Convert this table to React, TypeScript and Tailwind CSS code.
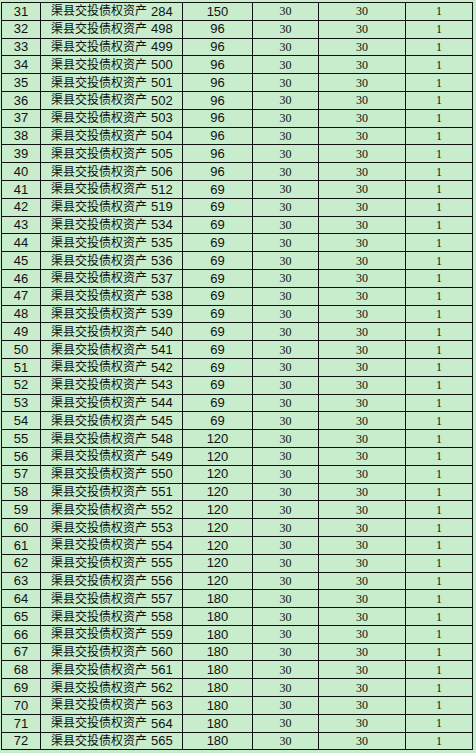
import React from 'react'

const rows: [number, number, number][] = [
  [31, 284, 150], [32, 498, 96], [33, 499, 96], [34, 500, 96], [35, 501, 96],
  [36, 502, 96], [37, 503, 96], [38, 504, 96], [39, 505, 96], [40, 506, 96],
  [41, 512, 69], [42, 519, 69], [43, 534, 69], [44, 535, 69], [45, 536, 69],
  [46, 537, 69], [47, 538, 69], [48, 539, 69], [49, 540, 69], [50, 541, 69],
  [51, 542, 69], [52, 543, 69], [53, 544, 69], [54, 545, 69], [55, 548, 120],
  [56, 549, 120], [57, 550, 120], [58, 551, 120], [59, 552, 120], [60, 553, 120],
  [61, 554, 120], [62, 555, 120], [63, 556, 120], [64, 557, 180], [65, 558, 180],
  [66, 559, 180], [67, 560, 180], [68, 561, 180], [69, 562, 180], [70, 563, 180],
  [71, 564, 180], [72, 565, 180],
]

const sans = "font-['Liberation_Sans','Noto_Sans_CJK_SC',sans-serif]"
const serif = "font-['Liberation_Serif','Noto_Sans_CJK_SC',serif]"

export default function App() {
  return (
    <div className="min-h-[753px] w-[476px] bg-[#c7edcc] pt-[2px] pl-px">
      {/* table */}
      <div className="grid w-[472px] grid-cols-[38px_141px_69px_65px_86px_66px] auto-rows-[16.8px] gap-px border border-[#111] bg-[#111] text-[#111]">
        {rows.map(([no, asset, amount]) => (
          <React.Fragment key={no}>
            <div className={`flex items-center justify-center bg-[#c7edcc] text-[13px] ${sans}`}>{no}</div>
            <div className={`flex items-center bg-[#c7edcc] pl-[10px] ${sans}`}>
              <span className="text-[12px]">渠县交投债权资产</span>
              <span className="ml-[4px] text-[13px]">{asset}</span>
            </div>
            <div className={`flex items-center justify-center bg-[#c7edcc] text-[13px] ${sans}`}>{amount}</div>
            <div className={`flex items-center justify-center bg-[#c7edcc] text-[12px] ${serif}`}>30</div>
            <div className={`flex items-center justify-center bg-[#c7edcc] text-[12px] ${serif}`}>30</div>
            <div className={`flex items-center justify-center bg-[#c7edcc] text-[12px] ${serif}`}>1</div>
          </React.Fragment>
        ))}
      </div>
    </div>
  )
}
